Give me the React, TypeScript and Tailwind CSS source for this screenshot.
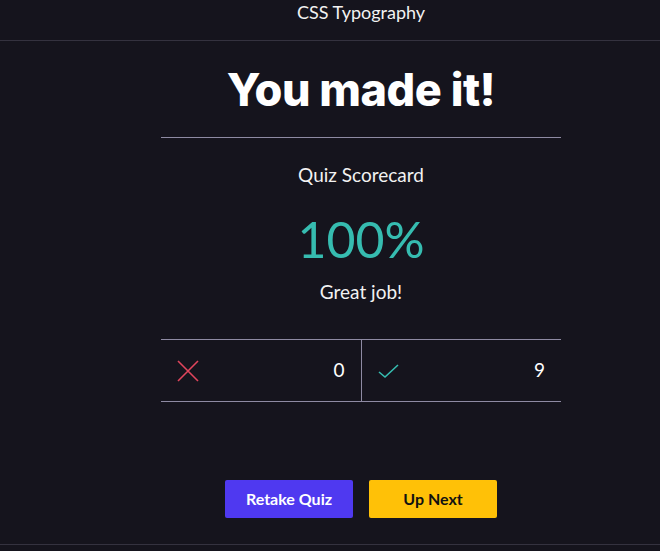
import React from "react";

export default function App() {
  return (
    <div className="w-[660px] h-[551px] bg-[#15141d] text-white flex flex-col overflow-hidden" style={{ fontFamily: "Lato, 'Noto Sans', sans-serif" }}>
      <div className="h-[41px] border-b border-[#34323f] flex justify-center pl-[62px] pt-[1px] text-[18px] leading-[22px] text-[#f2f2f2]">
        CSS Typography
      </div>
      <div className="flex flex-col items-center pl-[62px]">
        <h1 className="mt-[18px] h-[62px] text-[45px] leading-[62px] font-extrabold tracking-[-0.5px]" style={{ fontFamily: "Inter, sans-serif" }}>
          You made it!
        </h1>
        <div className="w-[400px] mt-[16px] border-t border-[#8e8aa3]"></div>
        <div className="mt-[25px] text-[19px] leading-[24px] text-[#f2f2f2]">Quiz Scorecard</div>
        <div className="mt-[22px] text-[50px] leading-[60px] text-[#36bcb0] font-normal">100%</div>
        <div className="mt-[11px] text-[19px] leading-[24px] text-[#f2f2f2]">Great job!</div>
        <div className="mt-[35px] w-[400px] h-[63px] border-t border-b border-[#8e8aa3] flex">
          <div className="flex-1 flex items-center justify-between pl-[16px] pr-[16px] border-r border-[#8e8aa3]">
            <svg width="22" height="22" viewBox="0 0 22 22" fill="none" stroke="#e0455c" strokeWidth="1.6">
              <path d="M1 1 L21 21 M21 1 L1 21" />
            </svg>
            <span className="text-[19px]">0</span>
          </div>
          <div className="flex-1 flex items-center justify-between pl-[16px] pr-[16px]">
            <svg width="22" height="22" viewBox="0 0 22 22" fill="none" stroke="#36bcb0" strokeWidth="1.6">
              <path d="M1 12 L7 17 L20 5" />
            </svg>
            <span className="text-[19px]">9</span>
          </div>
        </div>
        <div className="mt-[78px] flex gap-[16px]">
          <button className="w-[128px] h-[38px] rounded-[2px] bg-[#4f39f0] text-white text-[16px] font-bold">Retake Quiz</button>
          <button className="w-[128px] h-[38px] rounded-[2px] bg-[#ffc107] text-[#111] text-[16px] font-bold">Up Next</button>
        </div>
      </div>
      <div className="mt-[26px] w-full border-t border-[#34323f]"></div>
    </div>
  );
}
